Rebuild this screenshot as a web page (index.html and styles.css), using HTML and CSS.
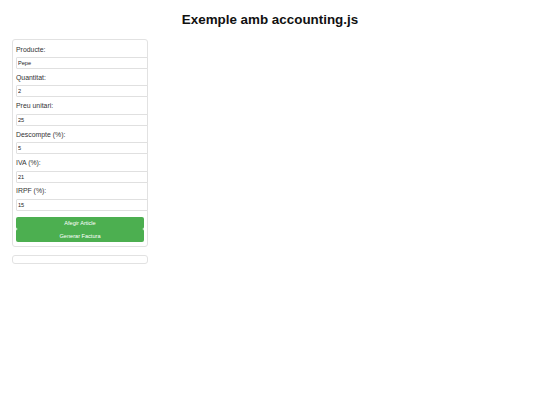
FILE: index.html
```html
<!DOCTYPE html>
<html lang="ca">

<head>
    <meta charset="UTF-8">
    <meta name="viewport" content="width=device-width, initial-scale=1.0">
    <title>Exemple amb accounting.js</title>
    <link rel="stylesheet" href="styles.css">
</head>

<body>

    <h1>Exemple amb accounting.js</h1>

    <div class="container">
        <form id="formFactura">

            <div class="form-group">
                <label for="producte">Producte:</label>
                <input type="text" id="producte" value="Pepe">
            </div>

            <div class="form-group">
                <label for="quantitat">Quantitat:</label>
                <input type="number" id="quantitat" value="2">
            </div>

            <div class="form-group">
                <label for="preu">Preu unitari:</label>
                <input type="number" id="preu" value="25">
            </div>

            <div class="form-group">
                <label for="descompte">Descompte (%):</label>
                <input type="number" id="descompte" value="5">
            </div>

            <div class="form-group">
                <label for="iva">IVA (%):</label>
                <input type="number" id="iva" value="21">
            </div>

            <div class="form-group">
                <label for="irpf">IRPF (%):</label>
                <input type="number" id="irpf" value="15">
            </div>

            <button type="button" class="first">Afegir Article</button>
            <button type="button">Generar Factura</button>
        </form>
    </div>

    <!-- aqui surt la factura -->
    <div class="container factura" id="factura"></div>

</body>

</html>
```

FILE: styles.css
```css
body {
    margin: 0;
    font-family: "Liberation Sans", Arial, sans-serif;
    color: #222;
    background: #ffffff;
}

h1 {
    margin: 0;
    padding-top: 12px;
    text-align: center;
    font-size: 13.4px;
    line-height: 15px;
    color: #111;
}

.container {
    width: 136px;
    box-sizing: border-box;
    margin: 12px 0 0 12px;
    padding: 3px;
    border: 1px solid #e2e2e2;
    border-radius: 3px;
}

.form-group {
    padding-bottom: 2.4px;
}

.form-group label {
    display: block;
    font-size: 6.9px;
    line-height: 8px;
    padding: 2.5px 0 3.5px;
    color: #333;
}

.form-group input {
    display: block;
    width: 100%;
    height: 10px;
    padding: 0 1px;
    margin: 0;
    border: 1px solid #e0e0e0;
    border-radius: 1px;
    font-family: "Liberation Sans", Arial, sans-serif;
    font-size: 5.6px;
    color: #222;
    outline: none;
    -moz-appearance: textfield;
}

.form-group input::-webkit-inner-spin-button,
.form-group input::-webkit-outer-spin-button {
    -webkit-appearance: none;
    margin: 0;
}

button {
    display: block;
    width: 100%;
    height: 12.5px;
    margin: 0;
    padding: 0;
    border: none;
    border-radius: 2px;
    background-color: #4caf50;
    color: #ffffff;
    font-family: "Liberation Sans", Arial, sans-serif;
    font-size: 5.6px;
    cursor: pointer;
}

button.first {
    margin-top: 3.5px;
}

form {
    padding-bottom: 1px;
}

.factura {
    margin-top: 8px;
    height: 9px;
}
```
